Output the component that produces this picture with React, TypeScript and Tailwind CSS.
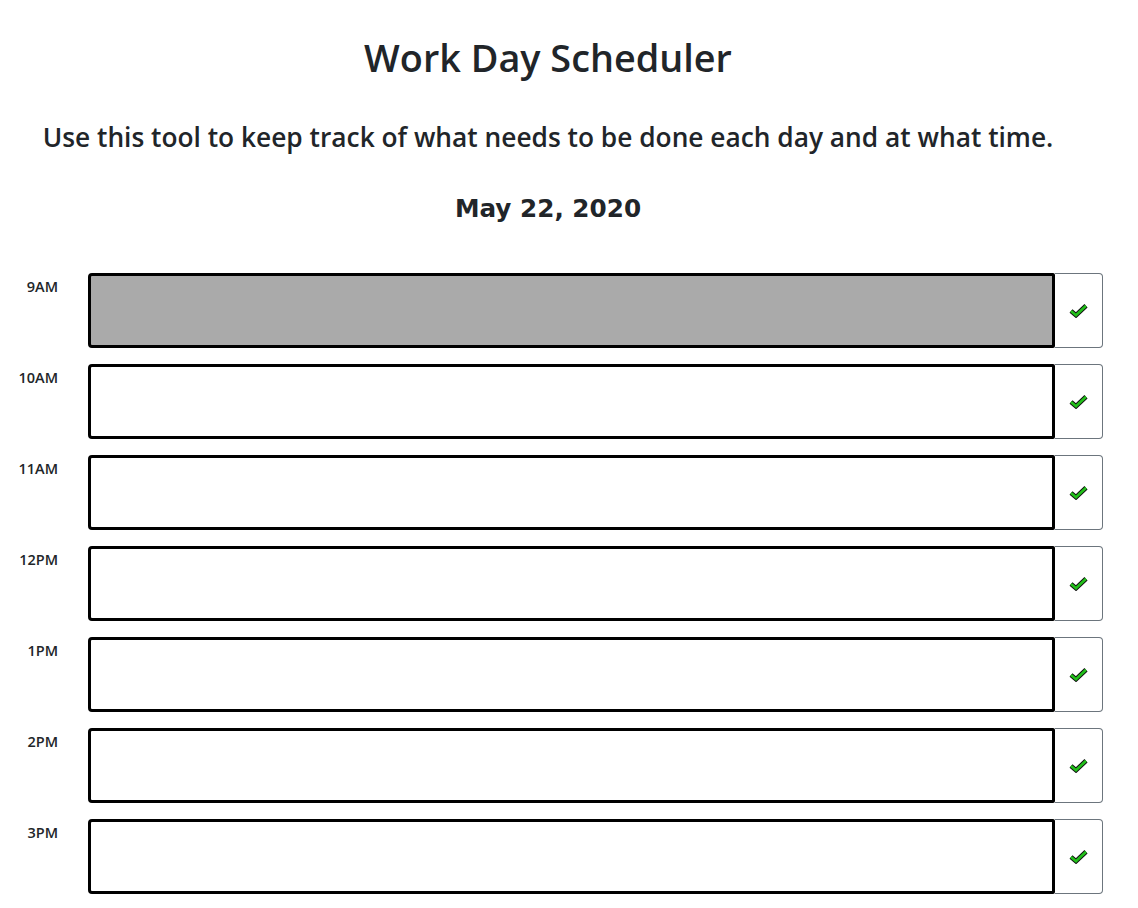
import React from 'react';

const hours = ['9AM', '10AM', '11AM', '12PM', '1PM', '2PM', '3PM'];

function Check() {
  return (
    <svg width="19" height="15" viewBox="0 0 19 15">
      <path d="M2 8 L7 12.2 L17 2.8" fill="none" stroke="#111" strokeWidth="4.6" strokeLinejoin="miter" />
      <path d="M2 8 L7 12.2 L17 2.8" fill="none" stroke="#22c01a" strokeWidth="2.6" strokeLinejoin="miter" />
    </svg>
  );
}

export default function App() {
  return (
    <div className="bg-white text-[#212529] min-h-[908px]" style={{ fontFamily: '"Open Sans", "Noto Sans", sans-serif' }}>
      <header className="pr-[42px]">
        <h1 className="text-center text-[37.8px] font-semibold pt-[31px] leading-[54px]">Work Day Scheduler</h1>
        <p className="text-center text-[26.3px] font-semibold mt-[32px] leading-[40px] whitespace-nowrap">
          Use this tool to keep track of what needs to be done each day and at what time.
        </p>
        <h2 className="text-center text-[24.7px] font-bold mt-[36px] leading-[32px]" style={{ fontFamily: '"DejaVu Sans", sans-serif' }}>
          May 22, 2020
        </h2>
      </header>
      <div className="mt-[48px] flex flex-col gap-[16px] pr-[35px]">
        {hours.map((h, i) => (
          <div key={h} className="flex h-[75px]">
            <div className="w-[88px] shrink-0 pr-[30px] text-right text-[14.5px] font-semibold pt-[3px]">{h}</div>
            <textarea
              className={`flex-1 resize-none border-[3px] border-black rounded-l-[4px] rounded-r-[2px] outline-none ${i === 0 ? 'bg-[#aaaaaa]' : 'bg-white'}`}
            />
            <button className="w-[48px] shrink-0 flex items-center justify-center border border-l-0 border-[#6c757d] rounded-r-[4px] bg-white">
              <Check />
            </button>
          </div>
        ))}
      </div>
    </div>
  );
}
